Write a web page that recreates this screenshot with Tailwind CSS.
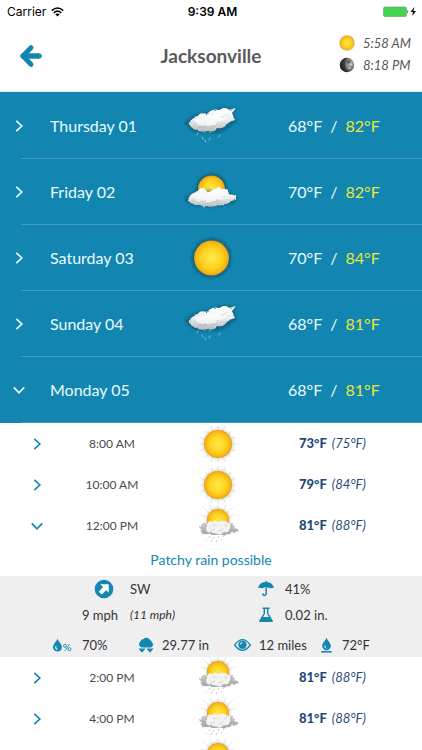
<!DOCTYPE html>
<html lang="en">
<head>
  <meta charset="UTF-8">
  <meta name="viewport" content="width=device-width, initial-scale=1">
  <title>Jacksonville</title>
  <script src="https://cdn.jsdelivr.net/npm/@tailwindcss/browser@4"></script>
</head>
<body class="h-screen flex flex-col overflow-hidden bg-white font-['Lato','Open_Sans',sans-serif] text-[#4a4a4a]">

  <!-- shared icons -->
  <svg class="absolute w-0 h-0" aria-hidden="true">
    <defs>
      <radialGradient id="sunFill">
        <stop offset="0" stop-color="#ffe84a" />
        <stop offset="0.6" stop-color="#fdd21f" />
        <stop offset="0.9" stop-color="#f8b413" />
        <stop offset="1" stop-color="#e09a14" />
      </radialGradient>
      <radialGradient id="sunShade">
        <stop offset="0.75" stop-color="#12414f" stop-opacity="0.6" />
        <stop offset="1" stop-color="#12414f" stop-opacity="0" />
      </radialGradient>
      <radialGradient id="sunGlow">
        <stop offset="0.6" stop-color="#7a6a50" stop-opacity="0.4" />
        <stop offset="1" stop-color="#999999" stop-opacity="0" />
      </radialGradient>
      <linearGradient id="cloudFill" x1="0" y1="0" x2="0" y2="1">
        <stop offset="0" stop-color="#ffffff" />
        <stop offset="0.5" stop-color="#eceeef" />
        <stop offset="1" stop-color="#b3babd" />
      </linearGradient>
      <linearGradient id="greyFill" x1="0" y1="0" x2="0" y2="1">
        <stop offset="0" stop-color="#cccccc" />
        <stop offset="1" stop-color="#a4a4a4" />
      </linearGradient>
      <radialGradient id="moonFill" cx="0.7" cy="0.4" r="0.7">
        <stop offset="0" stop-color="#b5b5b5" />
        <stop offset="0.5" stop-color="#777777" />
        <stop offset="1" stop-color="#1c1c1c" />
      </radialGradient>
      <filter id="soft" x="-20%" y="-30%" width="140%" height="160%">
        <feTurbulence type="fractalNoise" baseFrequency="0.18" numOctaves="2" seed="4" result="noise" />
        <feDisplacementMap in="SourceGraphic" in2="noise" scale="3" xChannelSelector="R" yChannelSelector="G" />
        <feGaussianBlur stdDeviation="0.7" />
      </filter>
      <filter id="softer" x="-30%" y="-30%" width="160%" height="160%">
        <feGaussianBlur stdDeviation="1.3" />
      </filter>
    </defs>

    <symbol id="chevron" viewBox="0 0 12 12">
      <path d="M3.3 0.8 L8.8 6 L3.3 11.2" fill="none" stroke="currentColor" stroke-width="1.7" />
    </symbol>

    <symbol id="day-rain" viewBox="0 0 56 44">
      <path d="M1 19 Q8 12 14 10 Q26 8 32 5 Q42 1 46 4 L54 3 L51 8 L54 18 Q47 22 43 26 Q34 31 28 29 Q14 31 8 26 Z" fill="#184b5d" opacity="0.5" filter="url(#softer)" />
      <path d="M7 20 Q7 13 14 12 Q18 8 24 10 Q29 4 36 6 Q43 2 46 6 L53 4 L49 9 L52 16 Q47 17 44 20 Q41 25 35 24 Q31 29 25 27 Q16 29 12 25 Q7 24 7 20 Z" fill="url(#cloudFill)" filter="url(#soft)" />
      <path d="M12 18 Q14 13 20 15 Q25 9 30 12 Q36 5 43 8 Q46 15 38 18 Q31 23 24 21 Q14 23 12 18 Z" fill="#ffffff" opacity="0.65" filter="url(#soft)" />
      <path d="M16 23 q5 2 8 -1 M28 23 q5 0 7 -4 M38 13 q4 1 6 -3" fill="none" stroke="#8f979b" stroke-width="1" opacity="0.4" filter="url(#soft)" />
      <path d="M15 29 l-1 2 M19 33 l1 2 M27 34 l-1 2 M22 36 l1 2 M37 31 l-1 2" stroke="#a8d5ee" stroke-width="0.9" stroke-linecap="round" opacity="0.85" />
    </symbol>

    <symbol id="day-sun" viewBox="0 0 56 44">
      <path d="M28 0 V44 M5 22 H51 M12 6 L44 38 M44 6 L12 38 M19 2 L37 42 M37 2 L19 42 M7 13 L49 31 M49 13 L7 31" stroke="#14485a" stroke-width="1" opacity="0.2" />
      <circle cx="28.5" cy="22" r="22" fill="url(#sunShade)" />
      <circle cx="28.5" cy="22" r="17.5" fill="url(#sunFill)" />
    </symbol>

    <symbol id="day-partly" viewBox="0 0 56 44">
      <path d="M28 0 V20 M10 2 L40 30 M46 2 L18 30 M18 0 L34 30 M38 0 L22 30" stroke="#14485a" stroke-width="1" opacity="0.2" />
      <circle cx="28.5" cy="19" r="17.5" fill="url(#sunShade)" />
      <circle cx="28.5" cy="19" r="13.5" fill="url(#sunFill)" />
      <path d="M1 29 Q7 22 14 20 L44 20 Q49 24 55 27 Q53 34 46 35 Q30 39 15 36 Q4 35 1 29 Z" fill="#184b5d" opacity="0.5" filter="url(#softer)" />
      <path d="M5 30 Q7 23 13 22 Q17 16 23 19 Q26 24 29 20 Q35 16 40 19 Q45 18 46 23 L52 26 L52 30 L48 31 Q45 35 38 34 Q31 38 24 36 Q16 37 12 34 Q7 34 5 30 Z" fill="url(#cloudFill)" filter="url(#soft)" />
      <path d="M11 28 Q16 20 23 25 Q31 18 42 22 Q46 28 38 30 Q28 33 20 32 Q13 33 11 28 Z" fill="#ffffff" opacity="0.6" filter="url(#soft)" />
      <path d="M17 31 q4 2 7 -1 M29 32 q4 0 6 -3 M39 27 q3 0 4 -2" fill="none" stroke="#8f979b" stroke-width="1" opacity="0.4" filter="url(#soft)" />
    </symbol>

    <symbol id="hour-sun" viewBox="0 0 42 42">
      <path d="M21 2 V40 M2 21 H40 M8 8 L34 34 M34 8 L8 34 M14 3 L28 39 M28 3 L14 39 M3 14 L39 28 M39 14 L3 28" stroke="#8b8578" stroke-width="1" opacity="0.2" />
      <circle cx="21" cy="21" r="18" fill="url(#sunGlow)" />
      <circle cx="21" cy="21" r="14" fill="url(#sunFill)" />
    </symbol>

    <symbol id="hour-partly-rain" viewBox="0 0 42 42">
      <path d="M21 0 V20 M6 2 L32 28 M36 2 L10 28 M13 0 L28 30 M29 0 L14 30 M4 10 L38 22 M38 10 L4 22" stroke="#8b8578" stroke-width="1" opacity="0.2" />
      <circle cx="21" cy="15" r="14.5" fill="url(#sunGlow)" />
      <circle cx="21" cy="15" r="11" fill="url(#sunFill)" />
      <path d="M1 23 L5 21 Q6 17 11 18 Q16 16 20 18 L32 17 Q36 19 38 21 L37 23 L41 24 Q40 28 35 28 Q31 30 26 29 Q17 31 12 29 Q4 30 4 26 Z" fill="url(#greyFill)" filter="url(#soft)" />
      <path d="M9 24 Q9 17 15 17 Q18 14 21 17 Q26 14 29 17 Q34 18 33 23 Q33 28 27 27 Q21 30 16 28 Q9 28 9 24 Z" fill="#f3f3f3" filter="url(#soft)" />
      <path d="M13 25 q3 1 5 -1 M21 26 q4 0 5 -3 M27 21 q3 0 3 -2 M16 20 q2 1 4 0" fill="none" stroke="#b9b5ac" stroke-width="0.8" opacity="0.6" />
      <path d="M13 31 l-1 2 M17 32 l-1 2 M22 31 l-1 2 M27 30 l-1 2 M10 35 l-1 1 M15 35 l-1 2 M20 35 l-1 2 M25 34 l-1 1" stroke="#8d97a8" stroke-width="0.8" opacity="0.65" />
    </symbol>
  </svg>

  <!-- status bar -->
  <div class="h-5 shrink-0 grid grid-cols-[1fr_auto_1fr] items-center pl-[7px] pr-1 pt-0.5 font-['Inter',sans-serif] text-[12px] leading-5 text-black">
    <div class="flex items-center gap-[5px]">
      <span>Carrier</span>
      <svg class="w-[13px] h-[10px]" viewBox="0 0 13 10" fill="none" stroke="currentColor" stroke-width="1.6">
        <path d="M0.8 3.6 Q6.5 -1.6 12.2 3.6" />
        <path d="M2.8 5.8 Q6.5 2.6 10.2 5.8" />
        <path d="M4.3 7.3 Q6.5 5.5 8.7 7.3 L6.5 9.6 Z" fill="currentColor" stroke="none" />
      </svg>
    </div>
    <span class="font-semibold">9:39 AM</span>
    <svg class="justify-self-end w-[36px] h-[12px]" viewBox="0 0 36 12">
      <rect x="1.5" y="1" width="23" height="9.5" rx="1.5" fill="#43d551" stroke="#5f9d67" stroke-width="0.6" />
      <path d="M25.4 3.9 q1.8 1.8 0 3.6 Z" fill="#222222" />
      <path d="M32.3 1.1 L28.6 6.1 H31 L30.2 10.1 L34 4.9 H31.5 Z" fill="#000000" />
    </svg>
  </div>

  <header class="h-[72px] shrink-0 grid grid-cols-[1fr_auto_1fr] items-center px-[11px] border-b border-[#d5f3f8]">
    <button type="button" aria-label="Back" class="justify-self-start pl-2">
      <svg class="w-[24px] h-[24px]" viewBox="0 0 24 24" fill="none" stroke="#1487b0">
        <path d="M4 12 H20" stroke-width="5.4" stroke-linecap="round" />
        <path d="M12 3.6 L4 12 L12 20.4" stroke-width="5" stroke-linecap="round" stroke-linejoin="round" />
      </svg>
    </button>
    <h1 class="text-[19px] leading-6 font-bold text-[#5a5a5a]">Jacksonville</h1>
    <div class="justify-self-end -mt-1 text-[13px] leading-[22px] italic text-[#555555]">
      <div class="flex items-center gap-2">
        <svg class="w-4 h-4" viewBox="0 0 16 16">
          <circle cx="8" cy="8" r="8" fill="#b08a3a" opacity="0.35" />
          <circle cx="8" cy="8" r="7.2" fill="url(#sunFill)" />
        </svg>
        <span>5:58 AM</span>
      </div>
      <div class="flex items-center gap-2">
        <svg class="w-4 h-4" viewBox="0 0 16 16">
          <circle cx="8" cy="8" r="7.2" fill="url(#moonFill)" />
          <path d="M8 0.8 A7.2 7.2 0 0 0 8 15.2 Q4.5 8 8 0.8 Z" fill="#222222" opacity="0.6" />
          <circle cx="9.5" cy="5" r="1.8" fill="#444444" opacity="0.7" />
          <circle cx="12" cy="7.5" r="1.3" fill="#dddddd" opacity="0.6" />
          <circle cx="10.5" cy="11" r="1.6" fill="#c8c8c8" opacity="0.6" />
        </svg>
        <span>8:18 PM</span>
      </div>
    </div>
  </header>

  <main class="flex-1 min-h-0 overflow-hidden">

    <!-- days -->
    <section class="pt-px bg-[#1286b0] text-[16px] text-[#e9fbff]">
      <button type="button" class="w-full h-[66px] relative grid grid-cols-[1fr_56px_1fr] items-center text-left">
        <span class="flex items-center pl-[13px] gap-[25px]"><svg class="w-3 h-3"><use href="#chevron" /></svg>Thursday 01</span>
        <svg class="w-[56px] h-[44px]"><use href="#day-rain" /></svg>
        <span class="flex gap-2 pl-[49px]"><span>68°F</span><span>/</span><span class="text-[#e8e83a]">82°F</span></span>
        <span class="absolute bottom-0 left-[21px] right-0 h-px bg-white/20"></span>
      </button>
      <button type="button" class="w-full h-[66px] relative grid grid-cols-[1fr_56px_1fr] items-center text-left">
        <span class="flex items-center pl-[13px] gap-[25px]"><svg class="w-3 h-3"><use href="#chevron" /></svg>Friday 02</span>
        <svg class="w-[56px] h-[44px]"><use href="#day-partly" /></svg>
        <span class="flex gap-2 pl-[49px]"><span>70°F</span><span>/</span><span class="text-[#e8e83a]">82°F</span></span>
        <span class="absolute bottom-0 left-[21px] right-0 h-px bg-white/20"></span>
      </button>
      <button type="button" class="w-full h-[66px] relative grid grid-cols-[1fr_56px_1fr] items-center text-left">
        <span class="flex items-center pl-[13px] gap-[25px]"><svg class="w-3 h-3"><use href="#chevron" /></svg>Saturday 03</span>
        <svg class="w-[56px] h-[44px]"><use href="#day-sun" /></svg>
        <span class="flex gap-2 pl-[49px]"><span>70°F</span><span>/</span><span class="text-[#e8e83a]">84°F</span></span>
        <span class="absolute bottom-0 left-[21px] right-0 h-px bg-white/20"></span>
      </button>
      <button type="button" class="w-full h-[66px] relative grid grid-cols-[1fr_56px_1fr] items-center text-left">
        <span class="flex items-center pl-[13px] gap-[25px]"><svg class="w-3 h-3"><use href="#chevron" /></svg>Sunday 04</span>
        <svg class="w-[56px] h-[44px]"><use href="#day-rain" /></svg>
        <span class="flex gap-2 pl-[49px]"><span>68°F</span><span>/</span><span class="text-[#e8e83a]">81°F</span></span>
        <span class="absolute bottom-0 left-[21px] right-0 h-px bg-white/20"></span>
      </button>
      <button type="button" aria-expanded="true" class="w-full h-[66px] relative grid grid-cols-[1fr_56px_1fr] items-center text-left">
        <span class="flex items-center pl-[13px] gap-[25px]"><svg class="w-3 h-3 rotate-90"><use href="#chevron" /></svg>Monday 05</span>
        <span></span>
        <span class="flex gap-2 pl-[49px]"><span>68°F</span><span>/</span><span class="text-[#e8e83a]">81°F</span></span>
        <span class="absolute bottom-0 left-[21px] right-0 h-px bg-white/20"></span>
      </button>
    </section>

    <!-- hours -->
    <section class="text-[12px]">
      <button type="button" class="w-full h-[41px] grid grid-cols-[74px_76px_1fr_136px] items-center">
        <svg class="w-3 h-3 justify-self-center text-[#1487b0]"><use href="#chevron" /></svg>
        <span>8:00 AM</span>
        <svg class="w-[42px] h-[42px] justify-self-center"><use href="#hour-sun" /></svg>
        <span class="flex gap-[5px] pl-[13px] text-[13px] text-[#1f4a78]"><b class="font-black">73°F</b><i>(75°F)</i></span>
      </button>
      <button type="button" class="w-full h-[41px] grid grid-cols-[74px_76px_1fr_136px] items-center">
        <svg class="w-3 h-3 justify-self-center text-[#1487b0]"><use href="#chevron" /></svg>
        <span>10:00 AM</span>
        <svg class="w-[42px] h-[42px] justify-self-center"><use href="#hour-sun" /></svg>
        <span class="flex gap-[5px] pl-[13px] text-[13px] text-[#1f4a78]"><b class="font-black">79°F</b><i>(84°F)</i></span>
      </button>
      <button type="button" aria-expanded="true" class="w-full h-[41px] grid grid-cols-[74px_76px_1fr_136px] items-center">
        <svg class="w-3 h-3 justify-self-center rotate-90 text-[#1487b0]"><use href="#chevron" /></svg>
        <span>12:00 PM</span>
        <svg class="w-[42px] h-[42px] justify-self-center"><use href="#hour-partly-rain" /></svg>
        <span class="flex gap-[5px] pl-[13px] text-[13px] text-[#1f4a78]"><b class="font-black">81°F</b><i>(88°F)</i></span>
      </button>

      <p class="h-[30px] text-center text-[14px] leading-7 text-[#1487b0]">Patchy rain possible</p>

      <div class="h-[81px] bg-[#efefef] text-[13px] leading-5 text-[#333333]">
        <div class="grid grid-cols-[118px_1fr_20px_146px] auto-rows-[26px] items-center">
          <svg class="w-5 h-5 justify-self-end mr-1" viewBox="0 0 20 20">
            <circle cx="10" cy="10" r="9.3" fill="#1487b0" />
            <path d="M6.3 5.3 H14.7 V13.7 L12.3 11.3 L7.6 15.6 L4.8 12.8 L9.1 8.1 Z" fill="#ffffff" />
          </svg>
          <span class="pl-3">SW</span>
          <svg class="w-5 h-5" viewBox="0 0 20 20">
            <path d="M2 9.3 Q3 3.6 9.4 3.1 V1.8 H10.6 V3.1 Q17 3.6 18 9.3 Q16.7 8.2 15.3 8.9 Q14 9.6 12.7 8.8 Q10 7.6 7.3 8.8 Q6 9.6 4.7 8.9 Q3.3 8.2 2 9.3 Z" fill="#1487b0" />
            <path d="M10.2 8.5 V14.6 Q10 16.4 8.4 16.4 Q6.8 16.3 6.7 14.4" fill="none" stroke="#1487b0" stroke-width="1.5" />
          </svg>
          <span class="pl-[9px]">41%</span>

          <span class="text-right">9 mph</span>
          <i class="pl-3 text-[12px]">(11 mph)</i>
          <svg class="w-5 h-5" viewBox="0 0 20 20">
            <path d="M6.5 3.2 H13.5 M8.3 3.2 V8.5 L3.8 16.2 H16.2 L11.7 8.5 V3.2" fill="none" stroke="#1487b0" stroke-width="1.4" stroke-linejoin="round" />
            <path d="M6 12 H14 L16.6 17 H3.4 Z" fill="#1487b0" />
          </svg>
          <span class="pl-[9px]">0.02 in.</span>
        </div>
        <div class="h-[29px] grid grid-cols-[85fr_96fr_87fr_101fr] items-center pt-1 pl-[53px]">
          <span class="flex items-center gap-[10px]">
            <span class="flex items-end">
              <svg class="w-[9px] h-[14px]" viewBox="0 0 9 14">
                <path d="M4.5 0.5 C5 3.2 9 5.8 9 9.2 A4.5 4.3 0 0 1 0 9.2 C0 5.8 4 3.2 4.5 0.5 Z" fill="#1487b0" />
                <path d="M3 8 Q2 10.6 4.4 11.6" fill="none" stroke="#efefef" stroke-width="1.1" />
              </svg>
              <svg class="w-[10px] h-[9px]" viewBox="0 0 10 9" fill="none" stroke="#1487b0" stroke-width="0.9">
                <circle cx="3" cy="2.8" r="1.5" />
                <circle cx="7.4" cy="6.2" r="1.5" />
                <path d="M7.7 1 L2.6 8" />
              </svg>
            </span>
            70%
          </span>
          <span class="flex items-center gap-2">
            <svg class="w-4 h-4" viewBox="0 0 16 16" fill="#1487b0">
              <path d="M3.8 10.5 A3.3 3.3 0 0 1 2.4 4.6 A3 3 0 0 1 5.4 2.2 A4 4 0 0 1 12 3 A3.2 3.2 0 0 1 14 5.4 A2.9 2.9 0 0 1 12.8 10.5 Z" />
              <path d="M0.4 11.6 H7.6 L4 15.8 Z M8.4 11.6 H15.6 L12 15.8 Z" />
            </svg>
            29.77 in
          </span>
          <span class="flex items-center gap-2">
            <svg class="w-[17px] h-[14px]" viewBox="0 0 17 14">
              <path d="M0.7 7 Q8.5 -3.6 16.3 7 Q8.5 17.6 0.7 7 Z" fill="none" stroke="#1487b0" stroke-width="1.3" />
              <circle cx="8.5" cy="6.8" r="4.2" fill="#1487b0" />
              <path d="M6.3 6.6 Q6.4 4.6 8.5 4.4" fill="none" stroke="#efefef" stroke-width="1" />
            </svg>
            12 miles
          </span>
          <span class="flex items-center gap-[10px]">
            <svg class="w-[11px] h-4" viewBox="0 0 11 16" fill="#1487b0">
              <path d="M5.5 0.5 C6 3.4 9.8 5.6 9.8 9 A4.3 4.2 0 0 1 1.2 9 C1.2 5.6 5 3.4 5.5 0.5 Z" />
              <path d="M4 8.4 Q3.4 10.4 5.4 11.4" fill="none" stroke="#efefef" stroke-width="1" />
              <rect x="0.3" y="14" width="10.4" height="1.6" />
            </svg>
            72°F
          </span>
        </div>
      </div>

      <button type="button" class="w-full h-[41px] grid grid-cols-[74px_76px_1fr_136px] items-center">
        <svg class="w-3 h-3 justify-self-center text-[#1487b0]"><use href="#chevron" /></svg>
        <span>2:00 PM</span>
        <svg class="w-[42px] h-[42px] justify-self-center"><use href="#hour-partly-rain" /></svg>
        <span class="flex gap-[5px] pl-[13px] text-[13px] text-[#1f4a78]"><b class="font-black">81°F</b><i>(88°F)</i></span>
      </button>
      <button type="button" class="w-full h-[41px] grid grid-cols-[74px_76px_1fr_136px] items-center">
        <svg class="w-3 h-3 justify-self-center text-[#1487b0]"><use href="#chevron" /></svg>
        <span>4:00 PM</span>
        <svg class="w-[42px] h-[42px] justify-self-center"><use href="#hour-partly-rain" /></svg>
        <span class="flex gap-[5px] pl-[13px] text-[13px] text-[#1f4a78]"><b class="font-black">81°F</b><i>(88°F)</i></span>
      </button>
      <button type="button" aria-label="6:00 PM" class="w-full h-[41px] grid grid-cols-[74px_76px_1fr_136px] items-center">
        <svg class="w-3 h-3 justify-self-center text-[#1487b0]"><use href="#chevron" /></svg>
        <span></span>
        <svg class="w-[42px] h-[42px] justify-self-center"><use href="#hour-partly-rain" /></svg>
      </button>
    </section>
  </main>
</body>
</html>
